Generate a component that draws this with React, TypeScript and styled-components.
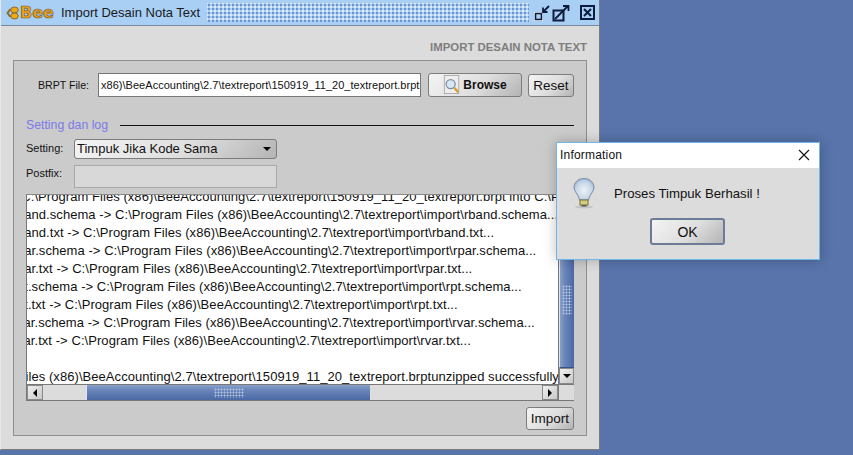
import React from 'react';
import styled, { createGlobalStyle } from 'styled-components';

const LOG_LINES = [
  'Extract from C:\\Program Files (x86)\\BeeAccounting\\2.7\\textreport\\150919_11_20_textreport.brpt into C:\\Program Files',
  'Extracting: rband.schema -> C:\\Program Files (x86)\\BeeAccounting\\2.7\\textreport\\import\\rband.schema...',
  'Extracting: rband.txt -> C:\\Program Files (x86)\\BeeAccounting\\2.7\\textreport\\import\\rband.txt...',
  'Extracting: rpar.schema -> C:\\Program Files (x86)\\BeeAccounting\\2.7\\textreport\\import\\rpar.schema...',
  'Extracting: rpar.txt -> C:\\Program Files (x86)\\BeeAccounting\\2.7\\textreport\\import\\rpar.txt...',
  'Extracting: rpt.schema -> C:\\Program Files (x86)\\BeeAccounting\\2.7\\textreport\\import\\rpt.schema...',
  'Extracting: rpt.txt -> C:\\Program Files (x86)\\BeeAccounting\\2.7\\textreport\\import\\rpt.txt...',
  'Extracting: rvar.schema -> C:\\Program Files (x86)\\BeeAccounting\\2.7\\textreport\\import\\rvar.schema...',
  'Extracting: rvar.txt -> C:\\Program Files (x86)\\BeeAccounting\\2.7\\textreport\\import\\rvar.txt...',
  '\u00a0',
  'C:\\Program Files (x86)\\BeeAccounting\\2.7\\textreport\\150919_11_20_textreport.brptunzipped successfully',
];

export default function App() {
  return (
    <Desktop>
      <GlobalStyle />
      <ImportWindow>
        <TitleBar>
          <Logo>
            <LogoWing width="13" height="14" viewBox="0 0 13 14">
              <ellipse cx="8.5" cy="4" rx="3.8" ry="3" fill="#f0a818" stroke="#8a6a30" />
              <ellipse cx="8.5" cy="10" rx="3.8" ry="3" fill="#f0a818" stroke="#8a6a30" />
              <path d="M4.5 3 L1.5 7 L4.5 11" fill="none" stroke="#8a6a30" strokeWidth="2" />
            </LogoWing>
            <LogoText>Bee</LogoText>
          </Logo>
          <TitleText>Import Desain Nota Text</TitleText>
          <TitleDots />
          <TitleIcons>
            <svg width="18" height="18" viewBox="0 0 18 18">
              <rect x="2.5" y="9.5" width="6" height="6" fill="none" stroke="#fff" strokeWidth="3" />
              <rect x="2.5" y="9.5" width="6" height="6" fill="#a9cff5" stroke="#0c1c3c" strokeWidth="1.6" />
              <path d="M16 2 L10.5 7.5 M10 3.5 V8 H14.5" fill="none" stroke="#0c1c3c" strokeWidth="1.8" />
            </svg>
            <svg width="18" height="18" viewBox="0 0 18 18">
              <rect x="1.5" y="6.5" width="10" height="10" fill="#a9cff5" stroke="#0c1c3c" strokeWidth="2" />
              <path d="M3 15 L16 2 M11 2 H16.5 V7" fill="none" stroke="#0c1c3c" strokeWidth="1.8" />
            </svg>
            <CloseIcon width="15" height="15" viewBox="0 0 15 15">
              <rect x="1" y="1" width="13" height="13" fill="#a9cff5" stroke="#0c1c3c" strokeWidth="2" />
              <path d="M4 4 L11 11 M11 4 L4 11" stroke="#0c1c3c" strokeWidth="2" />
            </CloseIcon>
          </TitleIcons>
        </TitleBar>

        <WindowBody>
          <Heading>IMPORT DESAIN NOTA TEXT</Heading>
          <MainPanel>
            <FileRow>
              <FileLabel>BRPT File:</FileLabel>
              <PathField>x86)\BeeAccounting\2.7\textreport\150919_11_20_textreport.brpt</PathField>
              <BrowseButton>
                <svg width="18" height="20" viewBox="0 0 20 22">
                  <rect x="1.5" y="0.5" width="16" height="20" fill="#eee" stroke="#a8a8a8" />
                  <circle cx="8.5" cy="10" r="5" fill="#d8e6f4" stroke="#7c8ca0" strokeWidth="1.4" />
                  <path d="M12.5 14 L17 19" stroke="#d69a30" strokeWidth="2.6" />
                </svg>
                Browse
              </BrowseButton>
              <PlainButton $width={46}>Reset</PlainButton>
            </FileRow>

            <SectionTitle>
              <SectionLabel>Setting dan log</SectionLabel>
              <SectionRule />
            </SectionTitle>

            <SettingRow>
              <FormLabel $lift={2}>Setting:</FormLabel>
              <SelectBox>
                Timpuk Jika Kode Sama
                <SelectArrow />
              </SelectBox>
            </SettingRow>
            <PostfixRow>
              <FormLabel $lift={7}>Postfix:</FormLabel>
              <DisabledField />
            </PostfixRow>

            <LogFrame>
              <LogViewport>
                <LogText>
                  {LOG_LINES.map((line, idx) => (
                    <div key={idx}>{line}</div>
                  ))}
                </LogText>
              </LogViewport>
              <VerticalBar>
                <ScrollButton $dir="up" />
                <VerticalSpacer />
                <VerticalThumb>
                  <VerticalGrip />
                </VerticalThumb>
                <ScrollButton $dir="down" />
              </VerticalBar>
              <HorizontalBar>
                <ScrollButton $dir="left" />
                <HorizontalSpacer />
                <HorizontalThumb>
                  <HorizontalGrip />
                </HorizontalThumb>
                <HorizontalRest />
                <ScrollButton $dir="right" />
              </HorizontalBar>
              <ScrollCorner />
            </LogFrame>

            <ActionRow>
              <PlainButton $width={48}>Import</PlainButton>
            </ActionRow>
          </MainPanel>
        </WindowBody>
      </ImportWindow>

      <InfoDialog>
        <DialogTitle>
          <span>Information</span>
          <svg width="12" height="12" viewBox="0 0 12 12">
            <path d="M1 1 L11 11 M11 1 L1 11" stroke="#111" strokeWidth="1.1" />
          </svg>
        </DialogTitle>
        <DialogBody>
          <DialogMessage>
            <svg width="26" height="32" viewBox="0 0 26 32">
              <defs>
                <radialGradient id="bulb" cx="0.5" cy="0.55" r="0.6">
                  <stop offset="0" stopColor="#eef2f6" />
                  <stop offset="0.7" stopColor="#c4d4e6" />
                  <stop offset="1" stopColor="#84a4cc" />
                </radialGradient>
              </defs>
              <ellipse cx="13" cy="30" rx="9" ry="1.5" fill="#c4c4c4" />
              <path
                d="M13 1.5 C6.5 1.5 3 6 3 10.5 C3 15 7.5 17 8.5 23 H17.5 C18.5 17 23 15 23 10.5 C23 6 19.5 1.5 13 1.5 Z"
                fill="url(#bulb)"
                stroke="#7f8ea4"
              />
              <rect x="9" y="23" width="8" height="5" fill="#d4cc80" stroke="#77703a" />
              <rect x="10.5" y="28" width="5" height="1.5" fill="#555" />
            </svg>
            <MessageText>Proses Timpuk Berhasil !</MessageText>
          </DialogMessage>
          <OkButton>OK</OkButton>
        </DialogBody>
      </InfoDialog>
    </Desktop>
  );
}

const GlobalStyle = createGlobalStyle`
  html, body {
    margin: 0;
    padding: 0;
    background: #5874ab;
  }
`;

const Desktop = styled.div`
  position: relative;
  width: 853px;
  height: 455px;
  overflow: hidden;
  background: #5874ab;
  font-family: 'Liberation Sans', Arial, sans-serif;
  color: #111;
`;

const ImportWindow = styled.div`
  box-sizing: border-box;
  width: 600px;
  height: 450px;
  display: flex;
  flex-direction: column;
  background: #dcdcdc;
  border-right: 1px solid #7c7c7c;
  border-bottom: 1px solid #7c7c7c;
  border-left: 1px solid #e8e8e8;
`;

const TitleBar = styled.div`
  box-sizing: border-box;
  height: 26px;
  flex: none;
  display: flex;
  align-items: center;
  background: #a9cff5;
  border-bottom: 1px solid #7a8a9a;
  padding-left: 5px;
`;

const Logo = styled.div`
  display: flex;
  align-items: center;
  gap: 1px;
  width: 55px;
`;

const LogoWing = styled.svg`
  flex: none;
`;

const LogoText = styled.span`
  font-family: 'DejaVu Sans', sans-serif;
  font-size: 16px;
  font-weight: bold;
  color: #f2a414;
  -webkit-text-stroke: 0.7px #6a5a3a;
`;

const TitleText = styled.span`
  font-size: 13px;
  color: #1a1a1a;
  white-space: nowrap;
`;

const TitleDots = styled.div`
  flex: 1;
  height: 19px;
  margin: 0 4px 0 7px;
  background-image:
    radial-gradient(circle, #6f93cc 0.9px, transparent 1.1px),
    radial-gradient(circle, #dfebfa 0.9px, transparent 1.1px);
  background-size: 4px 4px;
  background-position: 0 0, 2px 2px;
`;

const TitleIcons = styled.div`
  display: flex;
  align-items: center;
  gap: 1px;
  padding-right: 4px;
`;

const CloseIcon = styled.svg`
  margin-left: 9px;
`;

const WindowBody = styled.div`
  flex: 1;
  display: flex;
  flex-direction: column;
  padding: 0 12px 13px 12px;
  min-height: 0;
`;

const Heading = styled.div`
  height: 34px;
  box-sizing: border-box;
  padding-top: 8px;
  flex: none;
  display: flex;
  align-items: center;
  justify-content: flex-end;
  font-size: 11.4px;
  font-weight: bold;
  color: #7e7e7e;
`;

const MainPanel = styled.div`
  flex: 1;
  box-sizing: border-box;
  display: flex;
  flex-direction: column;
  background: #cbcbcb;
  border: 1px solid #8e8e8e;
  padding: 12px 12px 5px 12px;
`;

const FileRow = styled.div`
  display: flex;
  align-items: center;
  height: 24px;
`;

const FileLabel = styled.span`
  box-sizing: border-box;
  width: 72px;
  padding-left: 12px;
  font-size: 10.6px;
  white-space: nowrap;
  flex: none;
`;

const PathField = styled.div`
  box-sizing: border-box;
  width: 323px;
  height: 24px;
  background: #fff;
  border: 1px solid #777;
  font-size: 11px;
  letter-spacing: 0.03px;
  line-height: 22px;
  padding-left: 2px;
  white-space: nowrap;
  overflow: hidden;
`;

const buttonFace = `
  background: linear-gradient(135deg, #f4f4f4 0%, #dedede 55%, #b4b4b4 100%);
  border: 1px solid #7c7c7c;
  border-radius: 3px;
`;

const BrowseButton = styled.div`
  ${buttonFace}
  box-sizing: border-box;
  width: 94px;
  height: 24px;
  margin-left: 7px;
  display: flex;
  align-items: center;
  justify-content: center;
  gap: 2px;
  font-size: 12px;
  font-weight: bold;
`;

const PlainButton = styled.div<{ $width: number }>`
  ${buttonFace}
  box-sizing: border-box;
  width: ${(p) => p.$width}px;
  height: 23px;
  margin-left: 6px;
  display: flex;
  align-items: center;
  justify-content: center;
  font-size: 13.5px;
`;

const SectionTitle = styled.div`
  display: flex;
  align-items: center;
  margin-top: 19px;
  height: 18px;
`;

const SectionLabel = styled.span`
  font-size: 12.3px;
  color: #7a7ae8;
  white-space: nowrap;
`;

const SectionRule = styled.div`
  flex: 1;
  height: 1px;
  background: #111;
  margin-left: 12px;
`;

const SettingRow = styled.div`
  display: flex;
  align-items: center;
  height: 20px;
  margin-top: 5px;
`;

const PostfixRow = styled.div`
  display: flex;
  align-items: center;
  height: 23px;
  margin-top: 6px;
`;

const FormLabel = styled.span<{ $lift: number }>`
  width: 48px;
  flex: none;
  font-size: 11px;
  margin-bottom: ${(p) => p.$lift}px;
`;

const SelectBox = styled.div`
  ${buttonFace}
  box-sizing: border-box;
  width: 203px;
  height: 20px;
  display: flex;
  align-items: center;
  justify-content: space-between;
  padding: 0 5px 1px 2px;
  font-size: 13px;
`;

const SelectArrow = styled.i`
  width: 0;
  height: 0;
  border-left: 4px solid transparent;
  border-right: 4px solid transparent;
  border-top: 4px solid #000;
`;

const DisabledField = styled.div`
  box-sizing: border-box;
  width: 203px;
  height: 23px;
  background: #d8d8d8;
  border: 1px solid #a8a8a8;
`;

const LogFrame = styled.div`
  margin-top: 6px;
  box-sizing: border-box;
  height: 207px;
  display: grid;
  grid-template-columns: 1fr 16px;
  grid-template-rows: 1fr 16px;
  border: 1px solid #777;
  border-top-color: #888;
  border-right: 0;
  background: #fff;
`;

const LogViewport = styled.div`
  overflow: hidden;
  min-width: 0;
`;

const LogText = styled.div`
  margin: -7px 0 0 -80.2px;
  font-size: 13px;
  letter-spacing: 0.06px;
  line-height: 18px;
  white-space: nowrap;
`;

const VerticalBar = styled.div`
  display: flex;
  flex-direction: column;
  background: #dcdcdc;
  border-left: 1px solid #777;
`;

const VerticalSpacer = styled.div`
  height: 22px;
  flex: none;
`;

const thumbFace = `
  position: relative;
  display: flex;
  align-items: center;
  justify-content: center;
`;

const VerticalThumb = styled.div`
  ${thumbFace}
  flex: 1;
  background: linear-gradient(90deg, #8aa0c8 0%, #6c88bc 30%, #4a68a4 100%);
  border-left: 1px solid #dce6f4;
  border-bottom: 1px solid #3a5288;
`;

const VerticalGrip = styled.div`
  width: 10px;
  height: 30px;
  background-image: radial-gradient(circle, #b4c4e0 0.9px, transparent 1.1px);
  background-size: 3px 3px;
`;

const HorizontalBar = styled.div`
  display: flex;
  background: #dcdcdc;
  border-top: 1px solid #777;
`;

const HorizontalSpacer = styled.div`
  width: 43px;
  flex: none;
`;

const HorizontalThumb = styled.div`
  ${thumbFace}
  width: 284px;
  flex: none;
  background: linear-gradient(180deg, #8aa0c8 0%, #6c88bc 30%, #4a68a4 100%);
  border-left: 1px solid #dce6f4;
  box-sizing: border-box;
`;

const HorizontalGrip = styled.div`
  width: 30px;
  height: 10px;
  background-image: radial-gradient(circle, #b4c4e0 0.9px, transparent 1.1px);
  background-size: 3px 3px;
`;

const HorizontalRest = styled.div`
  flex: 1;
`;

const ScrollCorner = styled.div`
  background: #dcdcdc;
  border-top: 1px solid #777;
  border-left: 1px solid #777;
`;

const ARROWS = {
  up: 'border-left: 4px solid transparent; border-right: 4px solid transparent; border-bottom: 4px solid #000;',
  down: 'border-left: 4px solid transparent; border-right: 4px solid transparent; border-top: 4px solid #000;',
  left: 'border-top: 4px solid transparent; border-bottom: 4px solid transparent; border-right: 4px solid #000;',
  right: 'border-top: 4px solid transparent; border-bottom: 4px solid transparent; border-left: 4px solid #000;',
};

const ScrollButton = styled.div<{ $dir: keyof typeof ARROWS }>`
  box-sizing: border-box;
  flex: none;
  width: ${(p) => (p.$dir === 'up' || p.$dir === 'down' ? '100%' : '16px')};
  height: ${(p) => (p.$dir === 'up' || p.$dir === 'down' ? '16px' : '100%')};
  display: flex;
  align-items: center;
  justify-content: center;
  background: linear-gradient(135deg, #f0f0f0, #c8c8c8);
  border: 1px solid #8a8a8a;

  &::after {
    content: '';
    width: 0;
    height: 0;
    ${(p) => ARROWS[p.$dir]}
  }
`;

const ActionRow = styled.div`
  display: flex;
  justify-content: flex-end;
  margin-top: 6px;
`;

const InfoDialog = styled.div`
  position: absolute;
  left: 556px;
  top: 142px;
  box-sizing: border-box;
  width: 264px;
  height: 118px;
  background: #dcdcdc;
  border: 1px solid #6fb6ea;
  box-shadow: 0 0 12px rgba(0, 0, 0, 0.25);
`;

const DialogTitle = styled.div`
  box-sizing: border-box;
  height: 25px;
  background: #fff;
  display: flex;
  align-items: center;
  justify-content: space-between;
  padding: 0 9px 2px 3px;
  font-size: 12px;

  span {
    letter-spacing: 0.2px;
  }
`;

const DialogBody = styled.div`
  display: flex;
  flex-direction: column;
  align-items: center;
`;

const DialogMessage = styled.div`
  align-self: stretch;
  display: flex;
  align-items: center;
  height: 50px;
  padding-left: 14px;
  box-sizing: border-box;
`;

const MessageText = styled.span`
  margin-left: 17px;
  font-size: 13.2px;
`;

const OkButton = styled.div`
  box-sizing: border-box;
  width: 75px;
  height: 27px;
  margin-right: 1px;
  display: flex;
  align-items: center;
  justify-content: center;
  font-size: 14px;
  background: linear-gradient(135deg, #f4f4f4 0%, #dedede 55%, #b4b4b4 100%);
  border: 2px solid #6c7c98;
  border-radius: 3px;
`;
